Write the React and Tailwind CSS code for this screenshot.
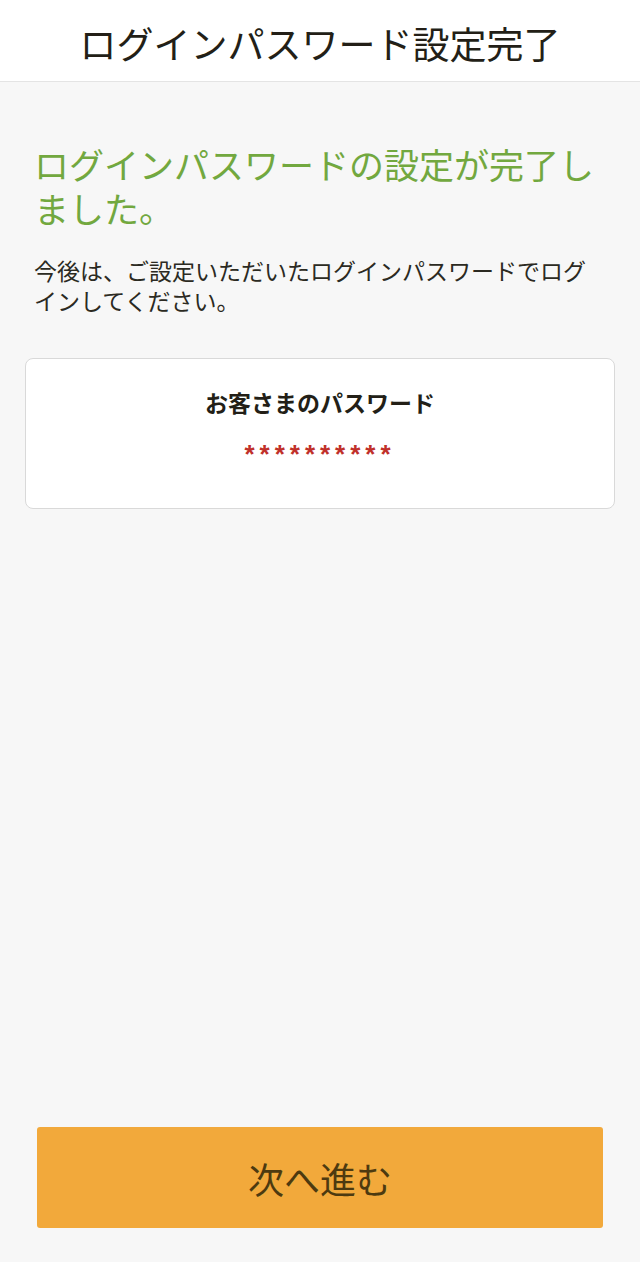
export default function App() {
  return (
    <div
      className="flex min-h-[1262px] flex-col bg-[#f7f7f7] text-[#2b2a22]"
      style={{ fontFamily: '"Noto Sans CJK JP", "Noto Sans", sans-serif' }}
    >
      {/* header */}
      <header className="flex h-[82px] items-center justify-center border-b border-[#e4e4e4] bg-white pt-[6px]">
        <h1 className="text-[37px] font-normal leading-none text-[#231f17]">ログインパスワード設定完了</h1>
      </header>

      <main className="flex-1">
        <div className="px-[34px] pt-[60px]">
          <h2 className="text-[35px] leading-[44px] text-[#72a83f]">ログインパスワードの設定が完了しました。</h2>
          <p className="mt-[25px] text-[23px] leading-[30px] text-[#2b2a22]">
            今後は、ご設定いただいたログインパスワードでログインしてください。
          </p>
        </div>

        {/* password card */}
        <div className="mx-[25px] mt-[43px] rounded-[8px] border border-[#d9d9d9] bg-white pb-[41px] pt-[28px] text-center">
          <p className="text-[23px] font-bold leading-[30px] text-[#231f17]">お客さまのパスワード</p>
          <p
            className="mt-[24px] text-[26px] font-bold leading-[26px] tracking-[5px] text-[#c0302a]"
            style={{ fontFamily: '"Liberation Sans", sans-serif' }}
          >
            **********
          </p>
        </div>
      </main>

      <div className="px-[37px] pb-[34px]">
        <button className="flex h-[101px] w-full items-center justify-center rounded-[3px] bg-[#f2a93b] text-[36px] text-[#4d3a10]">
          次へ進む
        </button>
      </div>
    </div>
  );
}
